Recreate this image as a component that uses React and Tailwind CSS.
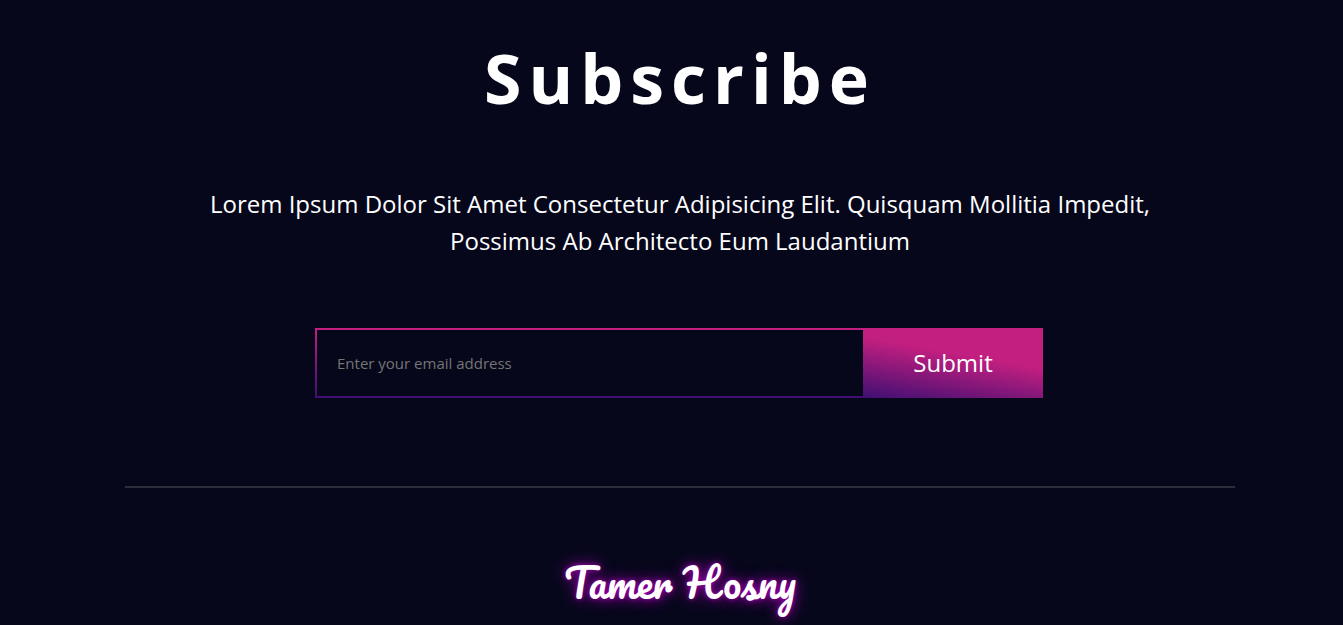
export default function App() {
  return (
    <div className="min-h-screen bg-[#06071b] pl-[125px] pr-[108px] pt-[26px] pb-1 font-['Segoe_UI','Open_Sans',sans-serif] text-white">
      <section className="flex flex-col items-center text-center">
        <h2 className="text-[68px] leading-[104px] font-bold tracking-[7px]">Subscribe</h2>
        <p className="mt-[55px] max-w-[1000px] text-2xl leading-[37px] capitalize">
          Lorem ipsum dolor sit amet consectetur adipisicing elit. Quisquam mollitia impedit,
          possimus ab architecto eum laudantium
        </p>
        <form className="mt-[69px] flex h-[70px] w-full max-w-[730px] pr-0.5" onSubmit={(e) => e.preventDefault()}>
          <input
            type="email"
            aria-label="Email address"
            placeholder="Enter your email address"
            className="min-w-0 flex-1 border-2 border-r-0 border-transparent px-5 text-[15px] outline-none [background:linear-gradient(#06071b,#06071b)_padding-box,linear-gradient(#c31f80,#3f0f72)_border-box] placeholder:text-[#757575]"
          />
          <button
            type="submit"
            className="w-[180px] bg-[linear-gradient(10deg,#3f0f72,#c31f80_60%)] text-2xl"
          >
            Submit
          </button>
        </form>
      </section>
      <hr className="mt-[88px] border-t-2 border-[#2d2c3c]" />
      <footer className="mt-[64px] flex justify-center">
        <a
          href="#"
          className="font-['Pacifico',cursive] text-[40px] leading-[60px] [text-shadow:0_0_5px_#a000b0,0_0_15px_#a000b0]"
        >
          Tamer Hosny
        </a>
      </footer>
    </div>
  );
}
